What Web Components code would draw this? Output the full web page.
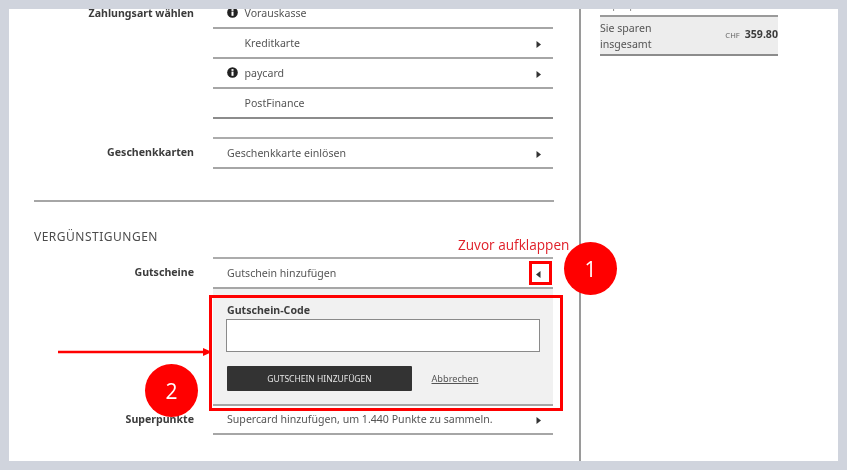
<!DOCTYPE html>
<html><head><meta charset="utf-8">
<style>
html,body{margin:0;padding:0;width:847px;height:470px;overflow:hidden;background:#d0d4dd}
body{font:10.6px/15px "Noto Sans",sans-serif;color:#4a4a4a}
</style></head><body>
<template id="t-row"><style>
:host{display:grid;grid-template-columns:160px 340px;column-gap:19px;height:30px;box-sizing:border-box}
:host([top]){height:32px}
:host([last]){height:29px}
.l{font-weight:700;color:#3c3c3c;text-align:right;align-self:center;padding-bottom:2px}
.c{display:flex;align-items:center;border-bottom:2px solid #a6a6a6;box-sizing:border-box;padding-left:14px;color:#555}
:host([top]) .c{border-top:2px solid #acacac}
:host([plain]) .c{border-bottom-color:#8c8c8c}
.i{display:none;width:17.5px;flex:none;margin-top:-1px}
:host([icon]) .i{display:flex}
.t{flex:1}
.a{width:17px;flex:none;display:flex;align-items:center;margin-top:2px}
</style><div class="l"><slot name="label"></slot></div><div class="c"><span class="i"><slot name="icon"></slot></span><span class="t"><slot></slot></span><span class="a"><slot name="arrow"></slot></span></div></template>

<template id="t-page"><style>
:host{display:block;position:relative;width:829px;height:452px;margin:9px;background:#fff;overflow:hidden;filter:blur(.35px)}
.wrap{display:grid;grid-template-columns:572px 1fr;height:100%}
.main{border-right:2px solid #9a9a9a;height:100%;box-sizing:border-box;padding:0 25px}
.side{padding-left:19px;width:178px}
</style><div class="wrap"><div class="main"><slot name="main"></slot></div><div class="side"><slot name="side"></slot></div></div><slot name="over"></slot></template>

<template id="t-summary"><style>
:host{display:block;width:178px}
.clip{height:18px;margin-top:-12px;color:#888;line-height:15px}
.box{background:#ededed;border-top:2px solid #9a9a9a;border-bottom:2px solid #8c8c8c;display:flex;align-items:center;justify-content:space-between;height:41px;box-sizing:border-box;line-height:16px;color:#555}
.p{color:#3c3c3c;font-weight:700;white-space:nowrap;margin-top:-2px}
.p small{font-weight:400;font-size:7.6px;color:#666;margin-right:5px}
</style><div class="clip">Superpunkte</div><div class="box"><span>Sie sparen<br>insgesamt</span><span class="p"><small>CHF</small>359.80</span></div></template>

<template id="t-panel"><style>
:host{display:block;margin-left:179px;width:340px;height:117px;box-sizing:border-box;background:#f1f1f1;border-bottom:2px solid #a6a6a6;padding:13px 13px 0 14px}
label{display:block;font-weight:700;color:#3c3c3c;line-height:16px}
.in{height:33px;box-sizing:border-box;background:#fff;border:1px solid #8a8a8a;margin:1px 0 0 -1px;width:314px}
.act{display:flex;align-items:center;margin-top:14px;gap:19.5px}
button{all:unset;width:185px;height:25px;line-height:25px;background:#333;border-radius:1px;color:#e6e6e6;font-family:"Noto Sans",sans-serif;font-size:8.5px;text-align:center;text-transform:uppercase}
a{color:#555;text-decoration:underline;font-size:9.2px}
</style><label>Gutschein-Code</label><div class="in"></div><div class="act"><button>Gutschein hinzufügen</button><a>Abbrechen</a></div></template>

<template id="t-note"><style>
:host{position:absolute;display:flex;align-items:center;justify-content:center;border-radius:50%;width:53px;height:53px;background:#f00;color:#fff;font:21px "Open Sans",sans-serif}
</style><slot></slot></template>

<script>
const T=(id)=>class extends HTMLElement{constructor(){super();this.attachShadow({mode:'open'}).appendChild(document.getElementById(id).content.cloneNode(true))}};
customElements.define('pay-row',T('t-row'));
customElements.define('shop-page',T('t-page'));
customElements.define('sum-box',T('t-summary'));
customElements.define('code-panel',T('t-panel'));
customElements.define('note-dot',T('t-note'));
</script>

<style>
.sec{margin-top:31px;border-top:2px solid #a6a6a6;padding-top:27px;font-size:12px;letter-spacing:.5px;color:#4c4c4c;line-height:15px}
.gap{display:block;height:18px}
.gap2{display:block;height:13px}
.over{position:absolute}
.r{border:3px solid #f00;box-sizing:border-box;position:absolute}
</style>
<svg width="0" height="0" style="position:absolute"><defs>
<symbol id="info" viewBox="0 0 12 12"><circle cx="6" cy="6" r="5.8" fill="#222"/><rect x="4.9" y="5" width="2.2" height="4.6" fill="#fff"/><rect x="4.9" y="2.3" width="2.2" height="1.9" fill="#fff"/></symbol>
<symbol id="ar" viewBox="0 0 5 7"><path d="M.5 0 5 3.5.5 7z" fill="#333"/></symbol>
<symbol id="al" viewBox="0 0 5 7"><path d="M4.5 0 0 3.5 4.5 7z" fill="#333"/></symbol>
</defs></svg>
<shop-page>
  <div slot="main" style="margin-top:-10px">
    <pay-row icon><span slot="label">Zahlungsart wählen</span><svg slot="icon" width="11" height="11"><use href="#info"/></svg>Vorauskasse</pay-row>
    <pay-row icon>Kreditkarte<svg slot="arrow" width="5" height="7"><use href="#ar"/></svg></pay-row>
    <pay-row icon><svg slot="icon" width="11" height="11"><use href="#info"/></svg>paycard<svg slot="arrow" width="5" height="7"><use href="#ar"/></svg></pay-row>
    <pay-row icon plain>PostFinance</pay-row>
    <span class="gap"></span>
    <pay-row top><span slot="label">Geschenkkarten</span>Geschenkkarte einlösen<svg slot="arrow" width="5" height="7"><use href="#ar"/></svg></pay-row>
    <div class="sec">VERGÜNSTIGUNGEN</div>
    <span class="gap2"></span>
    <pay-row top><span slot="label">Gutscheine</span>Gutschein hinzufügen<svg slot="arrow" width="5" height="7"><use href="#al"/></svg></pay-row>
    <code-panel></code-panel>
    <pay-row last><span slot="label">Superpunkte</span>Supercard hinzufügen, um 1.440 Punkte zu sammeln.<svg slot="arrow" width="5" height="7"><use href="#ar"/></svg></pay-row>
  </div>
  <sum-box slot="side"></sum-box>
  <div slot="over">
    <div class="over" style="left:449px;top:227px;font:13.6px/18px 'Open Sans',sans-serif;color:#e0202a;white-space:nowrap">Zuvor aufklappen</div>
    <div class="r" style="left:520px;top:252px;width:23px;height:24px"></div>
    <note-dot style="left:555px;top:233px">1</note-dot>
    <div class="r" style="left:200px;top:286px;width:354px;height:116px"></div>
    <note-dot style="left:136px;top:355px">2</note-dot>
    <svg class="over" style="left:49px;top:336px" width="154" height="14"><path d="M0 7H146" stroke="#f00" stroke-width="2.6"/><path d="M145 3 154 7 145 11z" fill="#f00"/></svg>
  </div>
</shop-page>
</body></html>
